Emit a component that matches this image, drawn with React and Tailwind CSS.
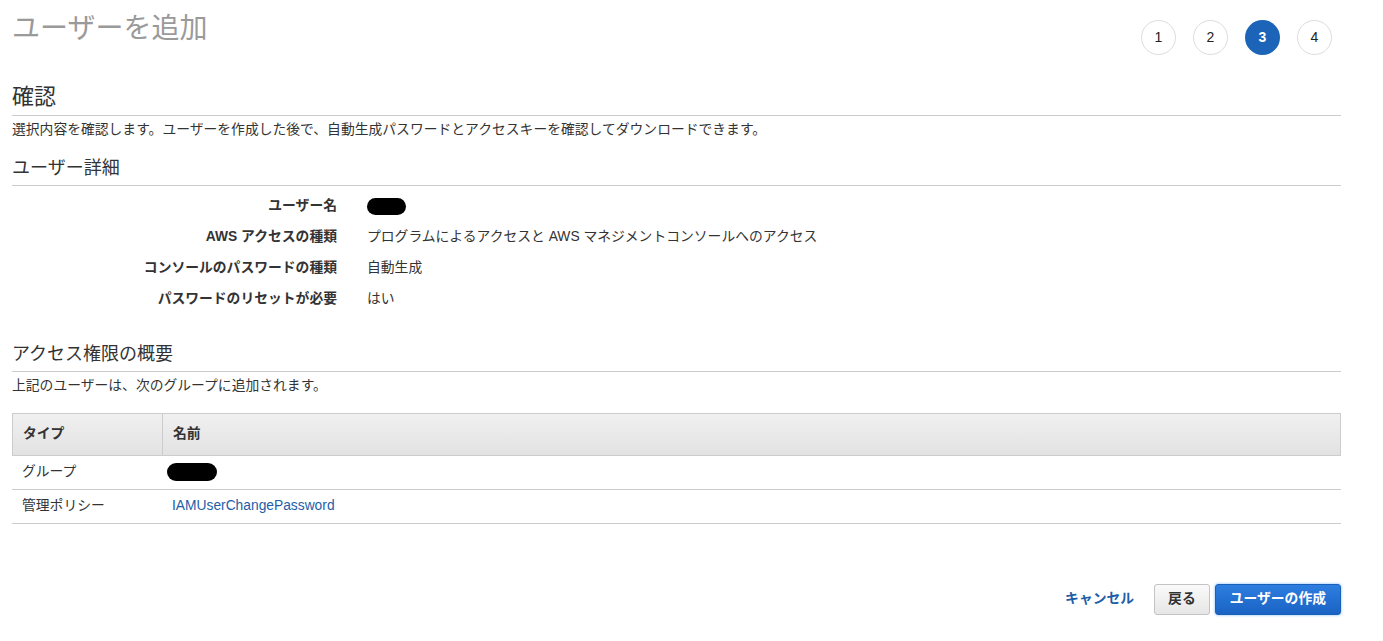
import React from "react";

const font = { fontFamily: '"Liberation Sans", "Noto Sans CJK JP", sans-serif' };

function Step({ n, active }) {
  return (
    <div
      className={
        "w-[35px] h-[35px] rounded-full flex items-center justify-center text-[14px] " +
        (active
          ? "bg-[#1b64b8] text-white font-bold"
          : "border border-[#dddddd] text-[#222] bg-white")
      }
    >
      {n}
    </div>
  );
}

function Blob({ w }) {
  return <div className={"h-[17px] rounded-full bg-black " + w} />;
}

function Row({ label, children }) {
  return (
    <div className="flex items-center h-[31px]">
      <div className="w-[325px] text-right font-bold text-[13.8px] text-[#333]">{label}</div>
      <div className="pl-[30px] text-[13.8px] text-[#333]">{children}</div>
    </div>
  );
}

export default function App() {
  return (
    <div style={font} className="w-[1383px] h-[641px] bg-white px-[12px] relative">
      <div className="w-[1329px]">
        <div className="flex justify-between items-start h-[55px]">
          <h1 className="text-[28px] text-[#9a9a9a] leading-none pt-[15px]">ユーザーを追加</h1>
          <div className="flex gap-[17px] pt-[20px] pr-[9px]">
            <Step n="1" />
            <Step n="2" />
            <Step n="3" active />
            <Step n="4" />
          </div>
        </div>

        <h2 className="text-[22px] text-[#333] mt-[31px] leading-none pb-[7px] border-b border-[#cccccc]">確認</h2>
        <p className="text-[13.8px] text-[#333] mt-[7px] leading-none">
          選択内容を確認します。ユーザーを作成した後で、自動生成パスワードとアクセスキーを確認してダウンロードできます。
        </p>

        <h3 className="text-[18px] text-[#333] mt-[22px] leading-none pb-[8px] border-b border-[#cccccc]">ユーザー詳細</h3>
        <div className="mt-[5px]">
          <Row label="ユーザー名"><Blob w="w-[39px]" /></Row>
          <Row label="AWS アクセスの種類">プログラムによるアクセスと AWS マネジメントコンソールへのアクセス</Row>
          <Row label="コンソールのパスワードの種類">自動生成</Row>
          <Row label="パスワードのリセットが必要">はい</Row>
        </div>

        <h3 className="text-[18px] text-[#333] mt-[30px] leading-none pb-[8px] border-b border-[#cccccc]">アクセス権限の概要</h3>
        <p className="text-[13.8px] text-[#333] mt-[7px] leading-none">上記のユーザーは、次のグループに追加されます。</p>

        <div className="mt-[20px] text-[13.8px] text-[#333]">
          <div className="flex h-[43px] border border-[#cccccc] bg-gradient-to-b from-[#f0f0f0] to-[#e2e2e2] font-bold">
            <div className="w-[150px] flex items-center pl-[10px] border-r border-[#cccccc]">タイプ</div>
            <div className="flex items-center pl-[10px]">名前</div>
          </div>
          <div className="flex h-[34px] border-b border-[#cccccc] items-center">
            <div className="w-[150px] pl-[10px]">グループ</div>
            <div className="pl-[5px]"><Blob w="w-[50px] h-[18px]" /></div>
          </div>
          <div className="flex h-[34px] border-b border-[#cccccc] items-center">
            <div className="w-[150px] pl-[10px]">管理ポリシー</div>
            <div className="pl-[10px] text-[#1e5ea8]">IAMUserChangePassword</div>
          </div>
        </div>

        <div className="flex justify-end items-center mt-[60px] gap-[5px]">
          <span className="text-[13.8px] font-bold text-[#1e5ea8] mr-[15px]">キャンセル</span>
          <button className="h-[31px] px-[13px] rounded-[3px] border border-[#c3c3c3] bg-gradient-to-b from-[#fafafa] to-[#e6e6e6] text-[13.8px] font-bold text-[#333]">
            戻る
          </button>
          <button className="h-[31px] px-[14px] rounded-[3px] border border-[#1860b8] bg-gradient-to-b from-[#2d7ee0] to-[#1a63c4] text-[13.8px] font-bold text-white shadow-[0_0_3px_#7db6f5]">
            ユーザーの作成
          </button>
        </div>
      </div>
    </div>
  );
}
